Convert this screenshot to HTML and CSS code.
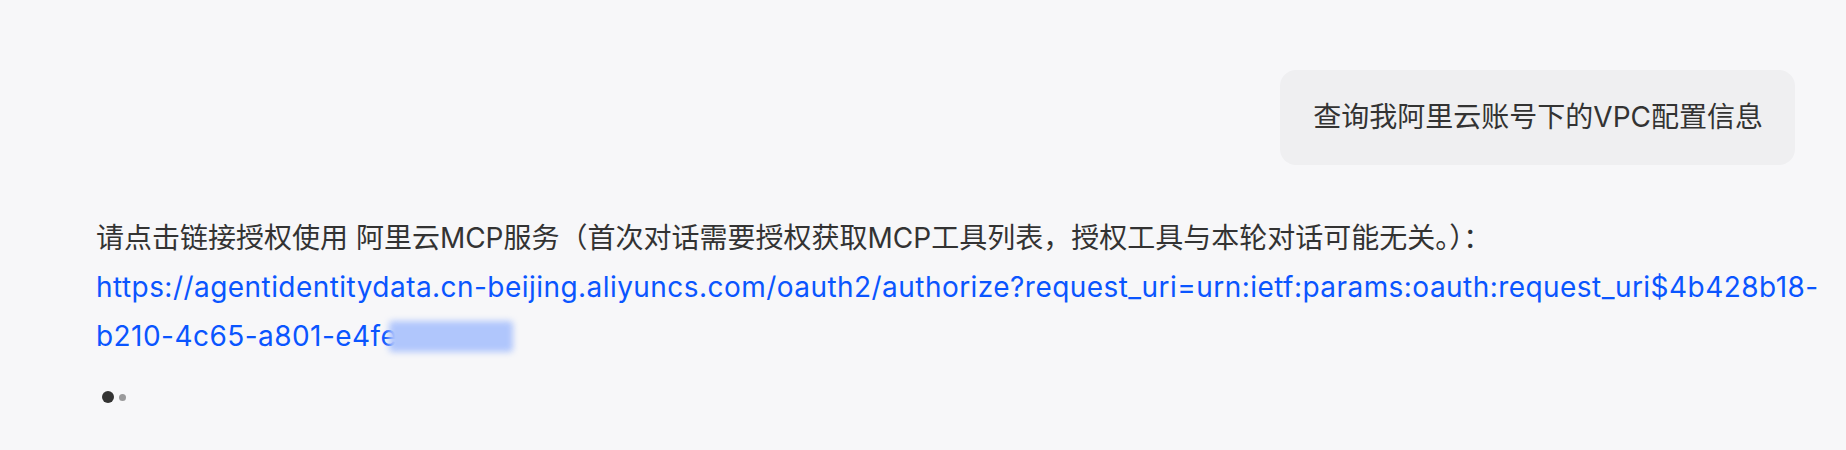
FILE: index.html
```html
<!DOCTYPE html>
<html lang="zh-CN">
<head>
<meta charset="utf-8">
<link rel="stylesheet" href="styles.css">
<title>Chat</title>
</head>
<body>
<main class="chat">
  <div class="row-user">
    <div class="bubble">查询我阿里云账号下的VPC配置信息</div>
  </div>
  <div class="answer">
    <p class="msg">请点击链接授权使用 阿里云MCP服务（首次对话需要授权获取MCP工具列表，授权工具与本轮对话可能无关。）：<br><a class="link" href="#"><span class="nobr">https://agentidentitydata.cn-beijing.aliyuncs.com/oauth2/authorize?request_uri=urn:ietf:params:oauth:request_uri$4b428b18-</span><wbr>b210-4c65-a801-e4fe<span class="masked"></span></a></p>
    <div class="loading">
      <span class="dot big"></span>
      <span class="dot small"></span>
    </div>
  </div>
</main>
</body>
</html>
```

FILE: styles.css
```css
html, body {
  margin: 0;
  padding: 0;
  background: #f7f7f9;
}
body {
  font-family: "Inter", "Noto Sans CJK SC", sans-serif;
  color: #333333;
}
.chat {
  display: flex;
  flex-direction: column;
  padding: 70px 51px 0 96px;
  height: 450px;
  box-sizing: border-box;
}
.row-user {
  display: flex;
  justify-content: flex-end;
}
.bubble {
  background: #efeff1;
  border-radius: 16px;
  padding: 27px 32px 27px 33px;
  font-size: 28px;
  line-height: 41px;
  color: #333333;
}
.answer {
  margin-top: 49px;
  padding-right: 36px;
}
.msg {
  margin: 0;
  font-size: 28px;
  line-height: 49px;
}
.link {
  color: #0a55ff;
  text-decoration: none;
  letter-spacing: 0.45px;
}
.nobr {
  white-space: nowrap;
}
.masked {
  display: inline-block;
  vertical-align: -6px;
  width: 124px;
  height: 31px;
  margin-left: -8px;
  background: #b0c6fc;
  filter: blur(3px);
  border-radius: 4px;
}
.loading {
  display: flex;
  align-items: center;
  gap: 5px;
  margin-top: 30px;
  padding-left: 6px;
}
.dot {
  display: block;
  border-radius: 50%;
}
.dot.big {
  width: 12px;
  height: 12px;
  background: #333333;
}
.dot.small {
  width: 7px;
  height: 7px;
  background: #9a9a9c;
}
```
